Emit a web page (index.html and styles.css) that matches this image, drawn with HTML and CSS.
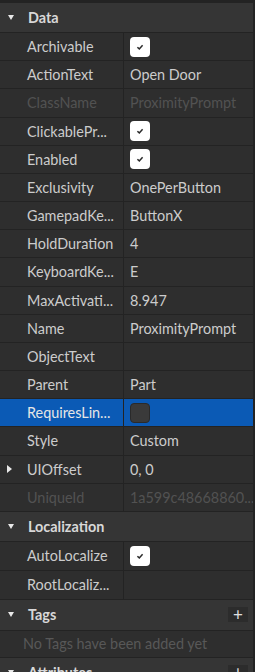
FILE: index.html
```html
<!DOCTYPE html>
<html lang="en">
<head>
    <meta charset="UTF-8">
    <meta name="viewport" content="width=device-width, initial-scale=1.0">
    <title>Properties - ProximityPrompt</title>
    <link rel="stylesheet" href="styles.css">
</head>
<body>
    <div class="panel">
        <div class="section-header header-data">
            <span class="caret caret-down"></span>
            <span class="section-title">Data</span>
        </div>

        <div class="prop-row">
            <div class="prop-name">Archivable</div>
            <div class="prop-value"><span class="check"><svg viewBox="0 0 10 10"><path d="M2.4 5.2 L4.3 6.9 L7.6 3.2"/></svg></span></div>
        </div>
        <div class="prop-row">
            <div class="prop-name">ActionText</div>
            <div class="prop-value">Open Door</div>
        </div>
        <div class="prop-row disabled">
            <div class="prop-name">ClassName</div>
            <div class="prop-value">ProximityPrompt</div>
        </div>
        <div class="prop-row">
            <div class="prop-name">ClickablePr...</div>
            <div class="prop-value"><span class="check"><svg viewBox="0 0 10 10"><path d="M2.4 5.2 L4.3 6.9 L7.6 3.2"/></svg></span></div>
        </div>
        <div class="prop-row">
            <div class="prop-name">Enabled</div>
            <div class="prop-value"><span class="check"><svg viewBox="0 0 10 10"><path d="M2.4 5.2 L4.3 6.9 L7.6 3.2"/></svg></span></div>
        </div>
        <div class="prop-row">
            <div class="prop-name">Exclusivity</div>
            <div class="prop-value">OnePerButton</div>
        </div>
        <div class="prop-row">
            <div class="prop-name">GamepadKe...</div>
            <div class="prop-value">ButtonX</div>
        </div>
        <div class="prop-row">
            <div class="prop-name">HoldDuration</div>
            <div class="prop-value">4</div>
        </div>
        <div class="prop-row">
            <div class="prop-name">KeyboardKe...</div>
            <div class="prop-value">E</div>
        </div>
        <div class="prop-row">
            <div class="prop-name">MaxActivati...</div>
            <div class="prop-value">8.947</div>
        </div>
        <div class="prop-row">
            <div class="prop-name">Name</div>
            <div class="prop-value">ProximityPrompt</div>
        </div>
        <div class="prop-row">
            <div class="prop-name">ObjectText</div>
            <div class="prop-value"></div>
        </div>
        <div class="prop-row">
            <div class="prop-name">Parent</div>
            <div class="prop-value">Part</div>
        </div>
        <div class="prop-row selected">
            <div class="prop-name">RequiresLin...</div>
            <div class="prop-value"><span class="check off"></span></div>
        </div>
        <div class="prop-row">
            <div class="prop-name">Style</div>
            <div class="prop-value">Custom</div>
        </div>
        <div class="prop-row">
            <div class="prop-name"><span class="caret caret-right"></span>UIOffset</div>
            <div class="prop-value">0, 0</div>
        </div>
        <div class="prop-row disabled">
            <div class="prop-name">UniqueId</div>
            <div class="prop-value">1a599c48668860...</div>
        </div>

        <div class="section-header">
            <span class="caret caret-down"></span>
            <span class="section-title">Localization</span>
        </div>
        <div class="prop-row tall">
            <div class="prop-name">AutoLocalize</div>
            <div class="prop-value"><span class="check"><svg viewBox="0 0 10 10"><path d="M2.4 5.2 L4.3 6.9 L7.6 3.2"/></svg></span></div>
        </div>
        <div class="prop-row tall">
            <div class="prop-name">RootLocaliz...</div>
            <div class="prop-value"></div>
        </div>

        <div class="section-header header-tags">
            <span class="caret caret-down"></span>
            <span class="section-title">Tags</span>
            <span class="add-btn">+</span>
        </div>
        <div class="empty-row">No Tags have been added yet</div>

        <div class="section-header">
            <span class="caret caret-down"></span>
            <span class="section-title">Attributes</span>
            <span class="add-btn">+</span>
        </div>
    </div>
</body>
</html>
```

FILE: styles.css
```css
* {
    margin: 0;
    padding: 0;
    box-sizing: border-box;
}

body {
    font-family: 'Lato', 'Liberation Sans', sans-serif;
    font-size: 14.4px;
    background: #2e2e2e;
    color: #cccccc;
    overflow: hidden;
}

.panel {
    width: 255px;
    padding-top: 3px;
    background: #232323;
    border-right: 2px solid #232323;
}

.section-header {
    display: flex;
    align-items: center;
    height: 30px;
    background: #353535;
    border-bottom: 1px solid #232323;
    padding-left: 8px;
}

.header-tags {
    height: 31px;
}

.section-title {
    font-weight: 700;
    color: #d8d8d8;
    margin-left: 14px;
}

.caret {
    display: inline-block;
    width: 0;
    height: 0;
}

.caret-down {
    border-left: 3.5px solid transparent;
    border-right: 3.5px solid transparent;
    border-top: 5px solid #e8e8e8;
}

.caret-right {
    border-top: 4px solid transparent;
    border-bottom: 4px solid transparent;
    border-left: 5px solid #e8e8e8;
    position: absolute;
    left: 7px;
    top: 50%;
    margin-top: -4px;
}

.add-btn {
    margin-left: auto;
    margin-right: 5px;
    width: 20px;
    height: 15px;
    background: #2c2c2c;
    color: #e0e0e0;
    font-size: 17px;
    line-height: 15px;
    text-align: center;
}

.prop-row {
    display: flex;
    height: 28.18px;
    background: #2e2e2e;
    border-bottom: 1px solid #232323;
}

.prop-row.tall {
    height: 29px;
}

.prop-name {
    position: relative;
    width: 124px;
    padding-left: 27px;
    border-right: 1px solid #232323;
    display: flex;
    align-items: center;
    white-space: nowrap;
    overflow: hidden;
}

.prop-value {
    flex: 1;
    padding-left: 6px;
    display: flex;
    align-items: center;
    white-space: nowrap;
    overflow: hidden;
}

.disabled .prop-name,
.disabled .prop-value {
    color: #525252;
}

.selected {
    background: #0b5ab5;
}

.selected .prop-name {
    color: #e6e6e6;
}

.check {
    display: flex;
    align-items: center;
    justify-content: center;
    width: 20px;
    height: 20px;
    border-radius: 4px;
    background: #ffffff;
}

.check svg {
    width: 10px;
    height: 10px;
    fill: none;
    stroke: #2a2a2a;
    stroke-width: 1.5;
}

.check.off {
    background: #3a3a3a;
    border: 1px solid #2a2a2a;
}

.empty-row {
    height: 27px;
    background: #2e2e2e;
    border-bottom: 1px solid #232323;
    padding-left: 23px;
    display: flex;
    align-items: center;
    color: #585858;
}
```
